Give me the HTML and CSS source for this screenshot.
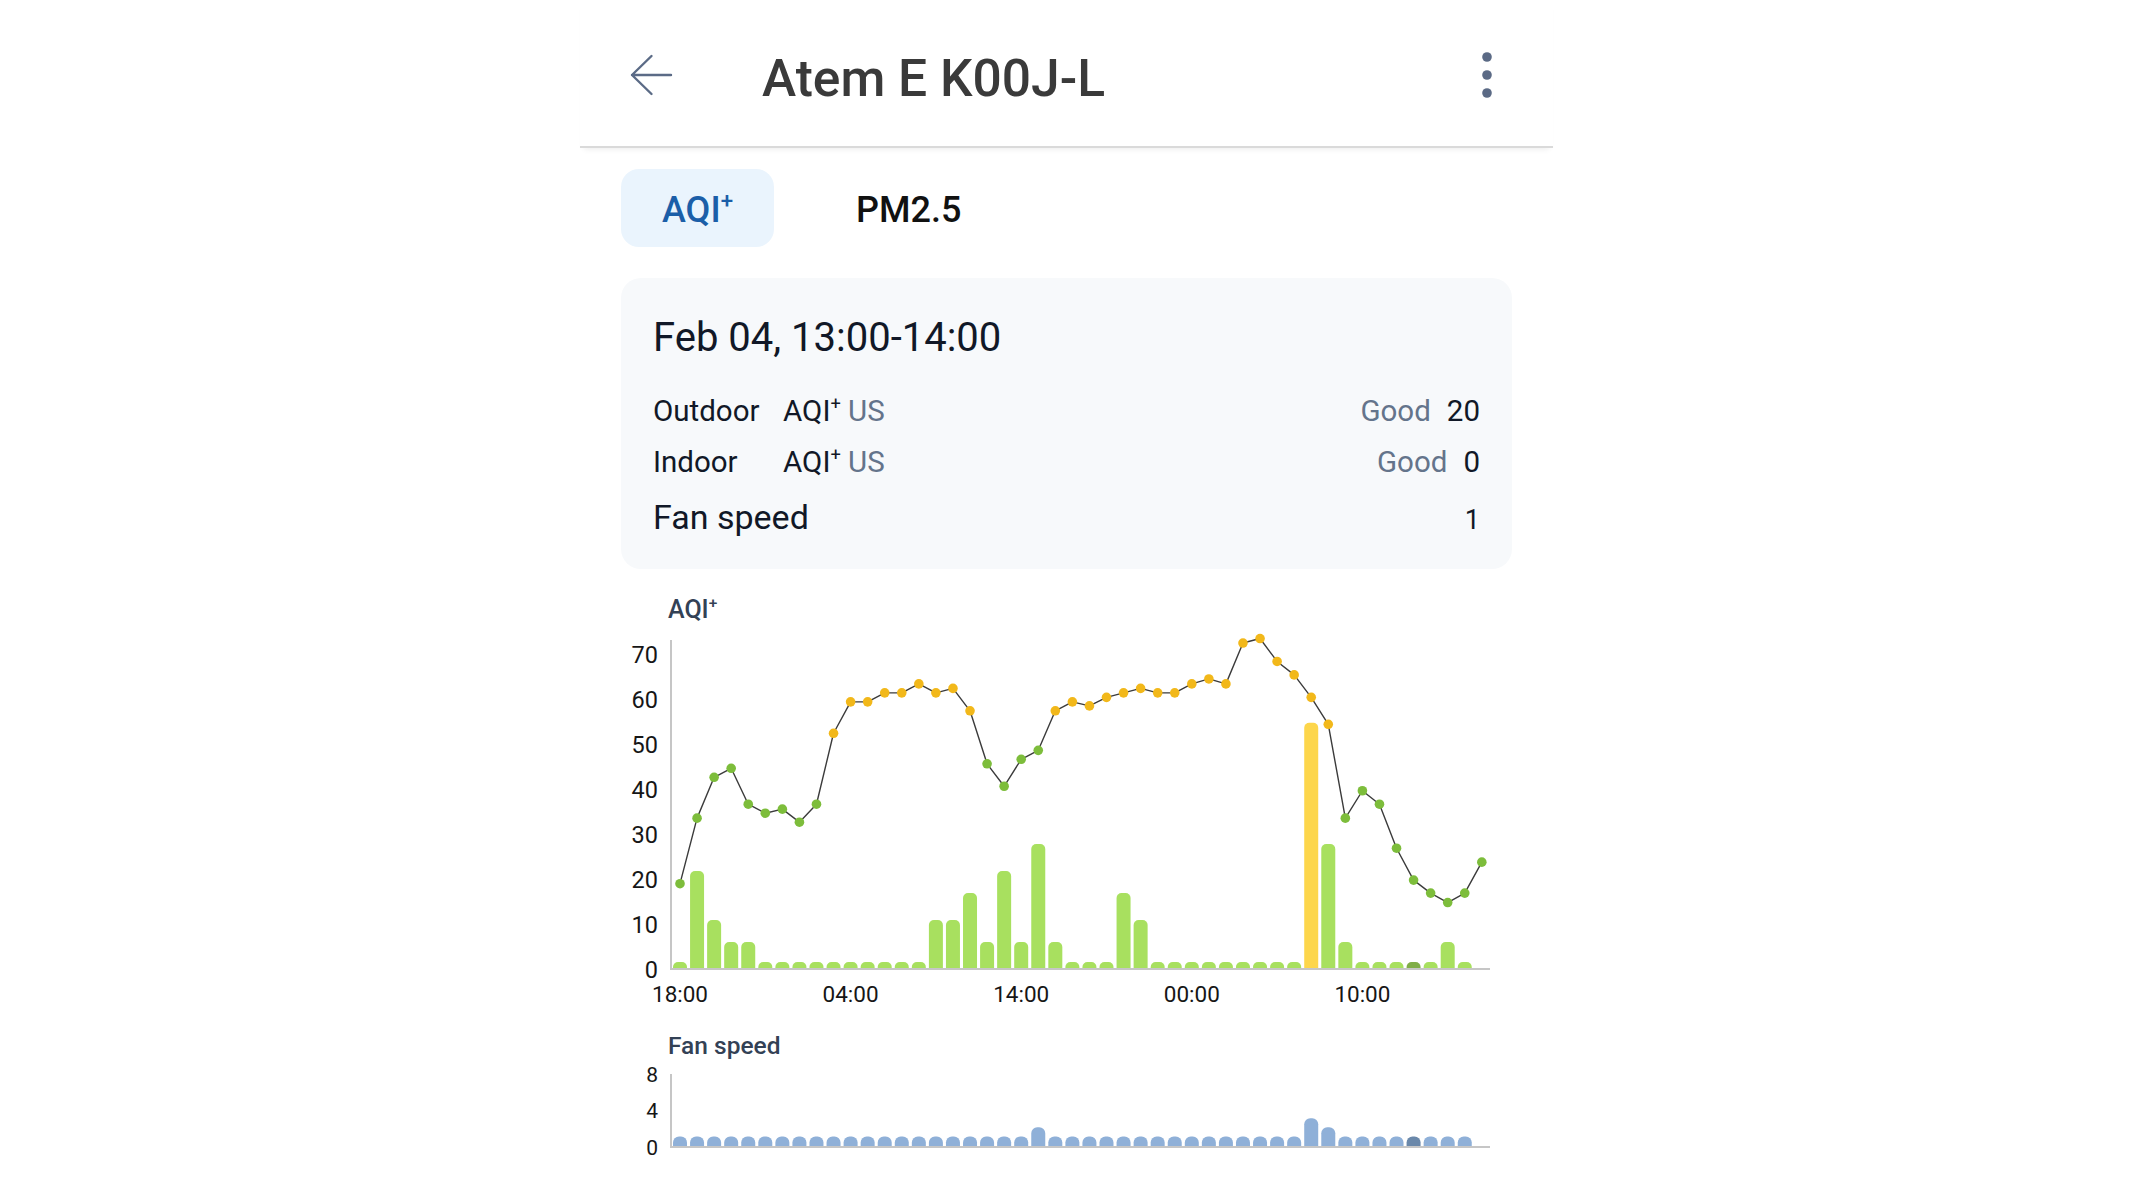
FILE: index.html
```html
<!DOCTYPE html>
<html lang="en">
<head>
<meta charset="utf-8">
<title>Atem E K00J-L</title>
<link rel="stylesheet" href="styles.css">
</head>
<body>
<div class="screen">
  <header class="appbar">
    <svg class="back" width="44" height="44" viewBox="0 0 44 44" aria-label="Back"><path d="M3 21H42M3 21L22.5 2M3 21L22.5 40"/></svg>
    <h1 class="title">Atem E K00J-L</h1>
    <svg class="kebab" width="12" height="46" viewBox="0 0 12 46" aria-label="More"><circle cx="6" cy="5" r="4.8"/><circle cx="6" cy="23" r="4.8"/><circle cx="6" cy="41" r="4.8"/></svg>
  </header>
  <main class="content">
    <nav class="tabs">
      <div class="tab active"><span>AQI<sup>+</sup></span></div>
      <div class="tab"><span>PM2.5</span></div>
    </nav>
    <section class="card">
      <div class="card-date">Feb 04, 13:00-14:00</div>
      <div class="row first">
        <span class="label">Outdoor</span>
        <span class="metric">AQI<sup>+</sup> <span class="unit">US</span></span>
        <span class="status">Good</span>
        <span class="value">20</span>
      </div>
      <div class="row">
        <span class="label">Indoor</span>
        <span class="metric">AQI<sup>+</sup> <span class="unit">US</span></span>
        <span class="status">Good</span>
        <span class="value">0</span>
      </div>
      <div class="row fan-row">
        <span class="label">Fan speed</span>
        <span class="value fan-value">1</span>
      </div>
    </section>
    <section class="chart">
      <h2 class="chart-title">AQI<sup>+</sup></h2>
      <svg id="aqi-chart" class="chart-svg aqi-svg" width="891" height="380" viewBox="0 0 891 380"></svg>
    </section>
    <section class="chart">
      <h2 class="chart-title fan-title">Fan speed</h2>
      <svg id="fan-chart" class="chart-svg fan-svg" width="891" height="100" viewBox="0 0 891 100"></svg>
    </section>
  </main>
</div>
<script src="script.js"></script>
</body>
</html>
```

FILE: styles.css
```css
html, body {
  margin: 0;
  padding: 0;
  background: #ffffff;
}

body {
  font-family: Roboto, "Noto Sans", "Liberation Sans", sans-serif;
  color: #111827;
}

.screen {
  width: 973px;
  margin: 0 auto;
  min-height: 1200px;
}

/* App bar */
.appbar {
  display: flex;
  align-items: flex-start;
  height: 148px;
  box-sizing: border-box;
  padding: 0 60px 0 49px;
  border-bottom: 2px solid #dadada;
  box-shadow: 0 5px 6px -4px rgba(0, 0, 0, 0.08);
}

.back {
  display: block;
  margin-top: 54px;
  fill: none;
  stroke: #5b6b86;
  stroke-width: 2.4;
  stroke-linecap: round;
  stroke-linejoin: round;
}

.title {
  margin: 48.6px 0 0 89px;
  font-weight: 500;
  font-size: 51.5px;
  line-height: 60px;
  color: #3a3a3a;
}

.kebab {
  display: block;
  margin-left: auto;
  margin-top: 52px;
  fill: #5b6a85;
}

/* Content */
.content {
  padding: 0 41px;
}

sup {
  font-size: 0.62em;
  line-height: 0;
  vertical-align: 0.62em;
}

.tabs {
  display: flex;
  gap: 41px;
  margin-top: 21px;
}

.tab {
  display: flex;
  align-items: center;
  height: 78px;
  box-sizing: border-box;
  padding: 3px 41px 0;
  border-radius: 18px;
  font-weight: 500;
  font-size: 36px;
  color: #111111;
}

.tab.active {
  background: #eaf4fd;
  color: #1b5ea8;
}

/* Card */
.card {
  margin-top: 31px;
  background: #f7f9fb;
  border-radius: 20px;
  padding: 37px 32px 27.5px;
}

.card-date {
  font-size: 40px;
  line-height: 46px;
  color: #111827;
}

.row {
  display: flex;
  align-items: baseline;
  font-size: 29.5px;
  line-height: 51px;
}

.row.first {
  margin-top: 24.8px;
}

.label {
  width: 130px;
  color: #111827;
}

.metric {
  color: #111827;
}

.unit,
.status {
  color: #64748b;
}

.status {
  margin-left: auto;
}

.value {
  margin-left: 16px;
  color: #111827;
}

.fan-row {
  margin-top: 7px;
  font-size: 34px;
  line-height: 44px;
}

.fan-row .label {
  width: auto;
}

.fan-value {
  margin-left: auto;
  font-size: 27px;
}

/* Charts */
.chart-title {
  margin: 25.5px 0 0 47px;
  font-weight: 500;
  font-size: 25px;
  line-height: 30px;
  color: #334155;
}

.fan-title {
  margin-top: 22px;
  font-size: 24.5px;
  line-height: 28px;
}

.chart-svg {
  display: block;
}

.aqi-svg {
  margin-top: 5px;
}

.fan-svg {
  margin-top: 4.5px;
}

.axis {
  fill: none;
  stroke: #c6c6c6;
  stroke-width: 2;
}

.trend {
  fill: none;
  stroke: #3b3b3b;
  stroke-width: 1.4;
  stroke-linejoin: round;
}

.ylab,
.xlab {
  font-family: Roboto, "Noto Sans", "Liberation Sans", sans-serif;
  font-size: 23.5px;
  fill: #161616;
}

.xlab {
  font-size: 22.5px;
}

.fan-svg .ylab {
  font-size: 21px;
}
```

FILE: script.js
```js
(function () {
  var NS = 'http://www.w3.org/2000/svg';

  function add(parent, tag, attrs, text) {
    var e = document.createElementNS(NS, tag);
    for (var k in attrs) e.setAttribute(k, attrs[k]);
    if (text != null) e.textContent = text;
    parent.appendChild(e);
    return e;
  }

  var STEP = 17.06, X0 = 59;
  function xi(i) { return X0 + STEP * i; }

  function barPath(cx, w, yb, h, r) {
    r = Math.min(r, h, w / 2);
    var x0 = cx - w / 2, x1 = cx + w / 2, yt = yb - h;
    return 'M' + x0 + ' ' + yb + 'V' + (yt + r) +
      'A' + r + ' ' + r + ' 0 0 1 ' + (x0 + r) + ' ' + yt +
      'H' + (x1 - r) +
      'A' + r + ' ' + r + ' 0 0 1 ' + x1 + ' ' + (yt + r) +
      'V' + yb + 'Z';
  }

  var SEL = 43;

  /* AQI chart */
  var line = [19, 33.6, 42.7, 44.7, 36.7, 34.7, 35.6, 32.7, 36.7, 52.5,
    59.5, 59.5, 61.5, 61.5, 63.5, 61.5, 62.5, 57.5, 45.7, 40.7,
    46.7, 48.7, 57.5, 59.5, 58.6, 60.5, 61.5, 62.5, 61.5, 61.5,
    63.5, 64.6, 63.5, 72.6, 73.6, 68.5, 65.5, 60.5, 54.5, 33.6,
    39.7, 36.7, 26.9, 19.8, 16.9, 14.8, 16.9, 23.8];

  var bars = [];
  for (var b = 0; b < 47; b++) bars.push(1);
  var set = { 1: 21.6, 2: 10.7, 3: 5.8, 4: 5.8, 15: 10.7, 16: 10.7, 17: 16.7, 18: 5.8,
    19: 21.6, 20: 5.8, 21: 27.6, 22: 5.8, 26: 16.7, 27: 10.7, 37: 54.6, 38: 27.6,
    39: 5.8, 45: 5.8 };
  for (var s in set) bars[s] = set[s];

  var aqi = document.getElementById('aqi-chart');
  var YB = 339, K = 4.49;

  add(aqi, 'path', { d: 'M50 10V' + YB + 'H869', 'class': 'axis' });

  for (var v = 0; v <= 70; v += 10) {
    add(aqi, 'text', { x: 37, y: (YB - K * v + 8.5).toFixed(1), 'text-anchor': 'end', 'class': 'ylab' }, String(v));
  }

  [[0, '18:00'], [10, '04:00'], [20, '14:00'], [30, '00:00'], [40, '10:00']].forEach(function (p) {
    add(aqi, 'text', { x: xi(p[0]).toFixed(1), y: 372, 'text-anchor': 'middle', 'class': 'xlab' }, p[1]);
  });

  bars.forEach(function (val, i) {
    var h = Math.max(val * K, 6);
    var fill = i === SEL ? '#80ad47' : (val > 50 ? '#fdd64b' : '#a8e05f');
    add(aqi, 'path', { d: barPath(xi(i), 14, YB - 1, h, 5), fill: fill });
  });

  var pts = line.map(function (val, i) {
    return xi(i).toFixed(2) + ',' + (YB - K * val).toFixed(2);
  }).join(' ');
  add(aqi, 'polyline', { points: pts, 'class': 'trend' });

  line.forEach(function (val, i) {
    add(aqi, 'circle', {
      cx: xi(i).toFixed(2), cy: (YB - K * val).toFixed(2), r: 4.8,
      fill: val > 50 ? '#f2b81a' : '#7dbd3b'
    });
  });

  /* Fan speed chart */
  var fan = document.getElementById('fan-chart');
  var FB = 83, FK = 9.1;
  add(fan, 'path', { d: 'M50 10V' + FB + 'H869', 'class': 'axis' });
  [8, 4, 0].forEach(function (val) {
    add(fan, 'text', { x: 37, y: (FB - FK * val + 7.5).toFixed(1), 'text-anchor': 'end', 'class': 'ylab' }, String(val));
  });
  var fanVals = [];
  for (var f = 0; f < 47; f++) fanVals.push(1);
  fanVals[21] = 2; fanVals[37] = 3; fanVals[38] = 2;
  fanVals.forEach(function (val, i) {
    add(fan, 'path', {
      d: barPath(xi(i), 14, FB - 1, val * FK + 0.5, 6),
      fill: i === SEL ? '#6a88aa' : '#8fb0d8'
    });
  });
})();
```
